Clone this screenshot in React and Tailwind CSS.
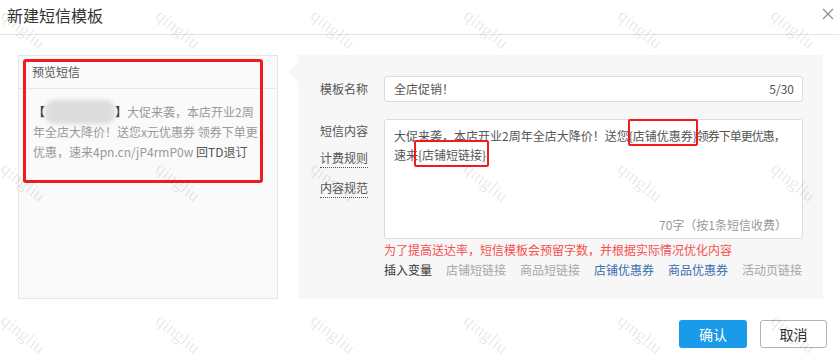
export default function App() {
  const wmCols = [23, 178, 333, 486, 640, 793];
  const wmRows = [29, 182, 334];
  return (
    <div className="relative w-[839px] h-[356px] overflow-hidden bg-white font-['Noto_Sans_CJK_SC','Noto_Sans',sans-serif] text-[12px] text-[#555]">
      {/* header */}
      <div className="h-[35px] border-b border-[#e5e5e5] flex items-center justify-between pl-[7px] pr-[5px] pb-[4px]">
        <div className="text-[16px] leading-[20px] text-[#333]">新建短信模板</div>
        <svg width="12" height="12" viewBox="0 0 12 12" className="mb-[2px]">
          <path d="M1 1 L11 11 M11 1 L1 11" stroke="#8a8a8a" strokeWidth="1.1" fill="none" />
        </svg>
      </div>

      {/* body */}
      <div className="flex pl-[18px] pt-[20px] gap-[20px]">
        {/* preview */}
        <div className="relative w-[260px] h-[244px] border border-[#e6e6e6] bg-[#fafafa]">
          <div className="h-[33px] border-b border-[#e8e8e8] flex items-center pl-[13px] text-[#555] leading-[20px]">
            预览短信
          </div>
          <div className="pt-[13px] pl-[14px] leading-[20px] text-[#999] whitespace-nowrap">
            <div className="flex items-center h-[20px]">
              <span className="font-bold text-[#333]">【</span>
              <span className="inline-block w-[70px] h-[24px] rounded-[9px] bg-[#dcdcdc] blur-[2px]"></span>
              <span className="font-bold text-[#333]">】</span>
              <span>大促来袭，本店开业2周</span>
            </div>
            <div>年全店大降价！送您x元优惠券 领券下单更</div>
            <div>
              优惠，速来4pn.cn/jP4rmP0w <span className="text-[#555]">回TD退订</span>
            </div>
          </div>
          <div className="absolute left-[4px] top-[3px] w-[240px] h-[124px] border-[3px] border-[#f01c1c] rounded-[3px]"></div>
        </div>

        {/* form */}
        <div className="relative w-[525px] h-[244px] bg-[#f7f7f7] pt-[21px] pr-[20px]">
          <div className="absolute left-[-10px] top-[7px] w-0 h-0 border-y-[10px] border-y-transparent border-r-[10px] border-r-[#f7f7f7]"></div>

          <div className="flex items-center">
            <div className="w-[70px] text-right leading-[20px]">模板名称</div>
            <div className="ml-[16px] w-[419px] h-[26px] bg-white border border-[#dcdcdc] rounded-[3px] flex items-center justify-between pl-[9px] pr-[8px] leading-[20px] text-[#555]">
              <span>全店促销！</span>
              <span>5/30</span>
            </div>
          </div>

          <div className="flex items-start mt-[17px]">
            <div className="w-[70px] flex flex-col items-end">
              <div className="mt-[2px] leading-[20px]">短信内容</div>
              <div className="mt-[8px] leading-[18px] border-b border-dotted border-[#555]">计费规则</div>
              <div className="mt-[11px] leading-[18px] border-b border-dotted border-[#555]">内容规范</div>
            </div>
            <div className="ml-[16px] w-[419px] h-[120px] bg-white border border-[#dcdcdc] rounded-[3px] flex flex-col pl-[9px] pt-[6px] pr-[15px] pb-[3px]">
              <div className="leading-[19px] text-[#555] whitespace-nowrap">
                <div>
                  大促来袭，本店开业2周年全店大降价！送您
                  <span className="relative">
                    {"{店铺优惠券}"}
                    <span className="absolute left-[-1px] right-[-1px] top-[-8px] bottom-[-2px] border-2 border-[#f01c1c] rounded-[2px]"></span>
                  </span>
                  <span className="tracking-[-1px]">领券下单更优惠，</span>
                </div>
                <div>
                  速来
                  <span className="relative">
                    {"{店铺短链接}"}
                    <span className="absolute left-[-4px] right-[-3px] top-[-6px] bottom-[-4px] border-2 border-[#f01c1c] rounded-[2px]"></span>
                  </span>
                </div>
              </div>
              <div className="mt-auto self-end leading-[20px] text-[#999]">70字（按1条短信收费）</div>
            </div>
          </div>

          <div className="ml-[86px] mt-[1px] leading-[20px] text-[#f5504f] whitespace-nowrap">
            为了提高送达率，短信模板会预留字数，并根据实际情况优化内容
          </div>
          <div className="ml-[86px] flex gap-[14px] leading-[20px] whitespace-nowrap">
            <span className="text-[#333]">插入变量</span>
            <span className="text-[#a6a6a6]">店铺短链接</span>
            <span className="text-[#a6a6a6]">商品短链接</span>
            <span className="text-[#3b6cb0]">店铺优惠券</span>
            <span className="text-[#3b6cb0]">商品优惠券</span>
            <span className="text-[#a6a6a6]">活动页链接</span>
          </div>
        </div>
      </div>

      {/* footer */}
      <div className="flex justify-end pr-[12px] mt-[21px] gap-[13px]">
        <div className="w-[68px] h-[28px] rounded-[3px] bg-[#199be9] text-white text-[14px] flex items-center justify-center">
          确认
        </div>
        <div className="w-[67px] h-[28px] rounded-[3px] border border-[#b3b3b3] bg-white text-[#333] text-[14px] flex items-center justify-center">
          取消
        </div>
      </div>

      {/* watermarks */}
      {wmRows.map((y) =>
        wmCols.map((x) => (
          <div
            key={x + "-" + y}
            className="pointer-events-none absolute -translate-x-1/2 -translate-y-1/2 rotate-[39deg] font-['Liberation_Serif',serif] text-[18px] leading-[18px] text-[#000]/[0.1] select-none"
            style={{ left: x, top: y }}
          >
            qingliu
          </div>
        ))
      )}
    </div>
  );
}
